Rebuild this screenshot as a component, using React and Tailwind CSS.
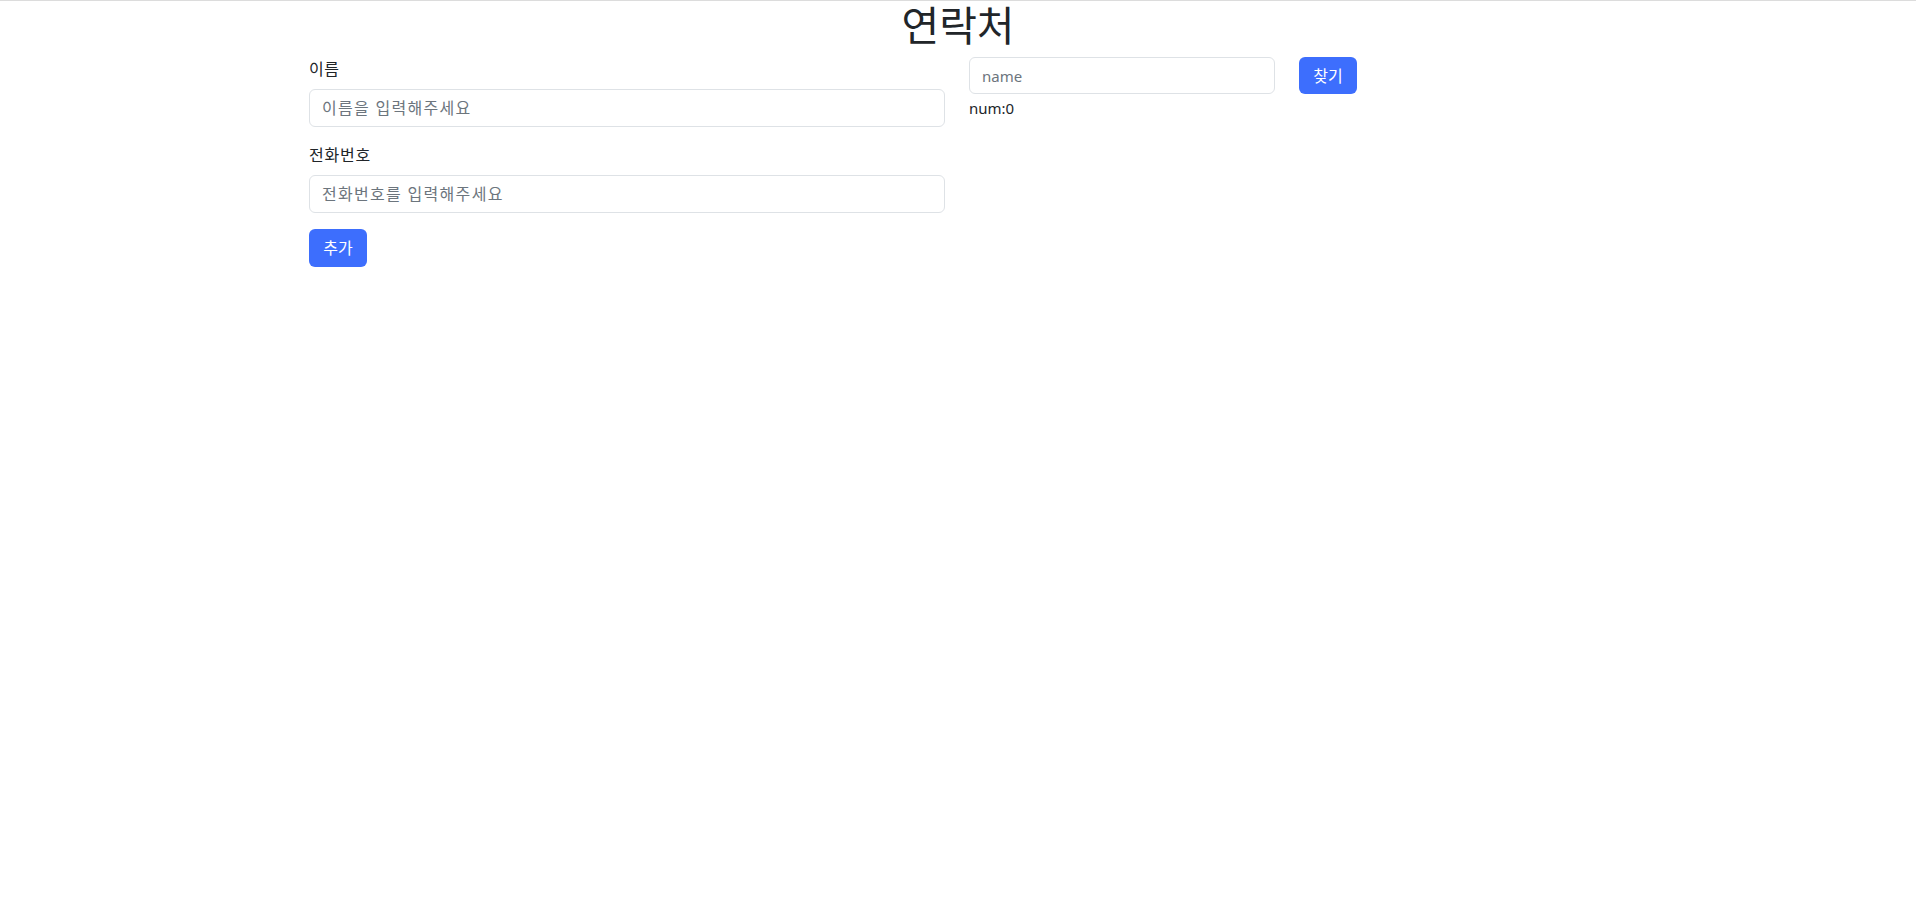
import React, { useState } from "react";

export default function App() {
    const [name, setName] = useState("");
    const [phone, setPhone] = useState("");
    const [query, setQuery] = useState("");
    const [contacts, setContacts] = useState([]);

    const handleAdd = () => {
        if (!name || !phone) return;
        setContacts((prev) => [...prev, { name, phone }]);
        setName("");
        setPhone("");
    };

    const found = contacts.filter((c) => query && c.name.includes(query));

    return (
        <div
            className="min-h-screen bg-white border-t border-[#dcdcdc] text-[#212529]"
            style={{ fontFamily: '"Noto Sans", "Noto Sans CJK KR", sans-serif' }}
        >
            <h1 className="text-center text-[41px] leading-[48px] font-normal mb-2">
                연락처
            </h1>
            <div className="mx-auto w-[1320px] pl-[11px] pr-3 flex">
                {/* 입력 폼 */}
                <div className="w-[636px] flex flex-col">
                    <div className="mb-4">
                        <label className="block text-base leading-6 mb-2 tracking-[0.5px]">이름</label>
                        <input
                            value={name}
                            onChange={(e) => setName(e.target.value)}
                            placeholder="이름을 입력해주세요"
                            className="w-full h-[38px] px-3 text-base border border-[#dee2e6] rounded-md placeholder:text-[#6c757d] placeholder:tracking-[1.3px] outline-none"
                        />
                    </div>
                    <div className="mb-4">
                        <label className="block text-base leading-6 mb-2 tracking-[0.8px]">전화번호</label>
                        <input
                            value={phone}
                            onChange={(e) => setPhone(e.target.value)}
                            placeholder="전화번호를 입력해주세요"
                            className="w-full h-[38px] px-3 text-base border border-[#dee2e6] rounded-md placeholder:text-[#6c757d] placeholder:tracking-[1.3px] outline-none"
                        />
                    </div>
                    <div>
                        <button
                            onClick={handleAdd}
                            className="w-[58px] h-[38px] bg-[#3d6efd] text-white text-base rounded-md"
                        >
                            추가
                        </button>
                    </div>
                </div>
                {/* 검색 */}
                <div className="ml-[24px] flex flex-col">
                    <div className="flex items-center gap-6">
                        <input
                            value={query}
                            onChange={(e) => setQuery(e.target.value)}
                            placeholder="name"
                            className="w-[306px] h-[37px] px-3 text-[15px] border border-[#dee2e6] rounded-md placeholder:text-[#6c757d] outline-none"
                        />
                        <button className="w-[58px] h-[37px] bg-[#3d6efd] text-white text-base rounded-md">
                            찾기
                        </button>
                    </div>
                    <div className="mt-[2px] text-[15px] leading-6">num:{found.length}</div>
                </div>
            </div>
        </div>
    );
}
